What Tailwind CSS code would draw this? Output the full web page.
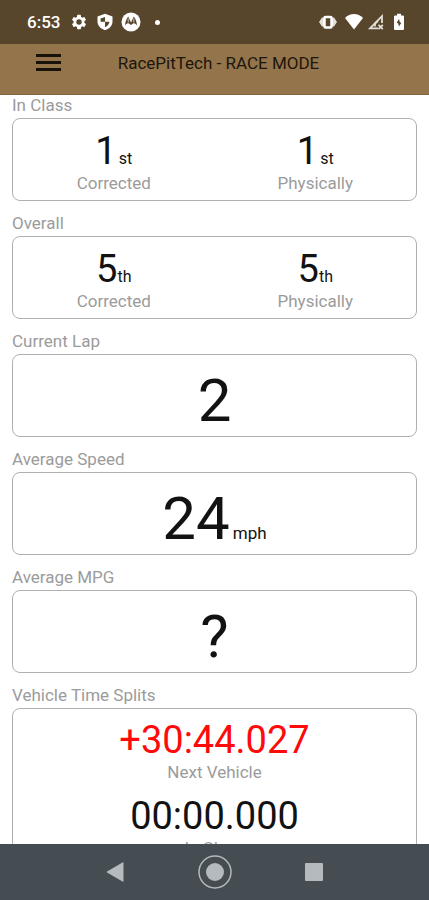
<!DOCTYPE html>
<html lang="en">

<head>
  <meta charset="UTF-8">
  <meta name="viewport" content="width=device-width, initial-scale=1.0">
  <title>RacePitTech - RACE MODE</title>
  <script src="https://cdn.jsdelivr.net/npm/@tailwindcss/browser@4"></script>
</head>

<body class="h-screen flex flex-col bg-white text-[#121212] font-[Roboto,sans-serif]">

  <!-- Status bar -->
  <div class="h-11 shrink-0 bg-[#57452c] text-white flex items-center pl-[27px] pr-6">
    <span class="text-[17px] leading-5 font-medium">6:53</span>
    <svg class="ml-2.5 w-[18px] h-[18px]" viewBox="0 0 24 24" fill="currentColor">
      <path d="M19.14 12.94c.04-.3.06-.61.06-.94s-.02-.64-.07-.94l2.03-1.58a.49.49 0 0 0 .12-.61l-1.92-3.32a.49.49 0 0 0-.59-.22l-2.39.96a7 7 0 0 0-1.62-.94l-.36-2.54a.48.48 0 0 0-.48-.41h-3.84a.47.47 0 0 0-.47.41l-.36 2.54c-.59.24-1.13.57-1.62.94l-2.39-.96a.48.48 0 0 0-.59.22L2.74 8.87a.47.47 0 0 0 .12.61l2.03 1.58c-.05.3-.09.63-.09.94s.02.64.07.94l-2.03 1.58a.49.49 0 0 0-.12.61l1.92 3.32c.12.22.37.29.59.22l2.39-.96c.5.38 1.03.7 1.62.94l.36 2.54c.05.24.24.41.48.41h3.84c.24 0 .44-.17.47-.41l.36-2.54c.59-.24 1.13-.56 1.62-.94l2.39.96c.22.08.47 0 .59-.22l1.92-3.32a.47.47 0 0 0-.12-.61zM12 15.6a3.6 3.6 0 1 1 0-7.2 3.6 3.6 0 0 1 0 7.2z" />
    </svg>
    <svg class="ml-2 w-[18px] h-[18px]" viewBox="0 0 18 18">
      <path fill="currentColor" d="M9 .8l7.500 2.700v5.100c0 4-3 7.400-7.500 8.600-4.500-1.200-7.500-4.600-7.500-8.600V3.500z" />
      <path fill="#57452c" d="M9 4v4.700H4.600V5.600zM9 8.700h4.400c-.2 2.500-1.900 4.500-4.400 5.500z" />
    </svg>
    <svg class="ml-[7px] w-5 h-5" viewBox="0 0 20 20">
      <circle cx="10" cy="10" r="9.500" fill="currentColor" />
      <path fill="#57452c" d="M7.200 4.500L10 10.500l2.800-6c1.800 2.300 3 5.600 3.200 9.300-.7-1.400-1.700-2.300-3.100-2.500-1.200.2-2.100.8-2.900 2-.8-1.200-1.700-1.800-2.900-2-1.400.2-2.400 1.100-3.100 2.500.2-3.700 1.400-7 3.200-9.300z" />
      <path stroke="#fff" stroke-width=".7" fill="none" d="M7.200 6.500v4M12.800 6.500v4" />
    </svg>
    <span class="ml-3.5 w-[5px] h-[5px] rounded-full bg-white"></span>

    <svg class="ml-auto w-5 h-[18px]" viewBox="0 0 20 18">
      <path fill="#e4dfd8" d="M1 9l3-4.500h2v9H4zM19 9l-3-4.500h-2v9h2z" />
      <rect x="6.500" y="4" width="7" height="10.500" rx="1" fill="none" stroke="currentColor" stroke-width="2.500" />
    </svg>
    <svg class="ml-[7px] w-[18px] h-[18px]" viewBox="0 0 18 18" fill="currentColor">
      <path d="M0 5C5-.2 13-.2 18 5L9 16.500z" />
    </svg>
    <svg class="ml-1 w-[18px] h-[18px]" viewBox="0 0 18 18">
      <path fill="none" stroke="#e4dfd8" stroke-width="1.800" d="M15 10V3.200L3 15.300h8" />
      <path fill="none" stroke="#e4dfd8" stroke-width="1.800" d="M11.500 11.800l4.300 4.300M15.800 11.800l-4.300 4.300M8 13.500v-3l3-2.500" />
    </svg>
    <svg class="ml-2 w-3 h-[18px]" viewBox="0 0 12 18">
      <path fill="currentColor" d="M4 .8h4v1.700h2a1 1 0 0 1 1 1V16a1 1 0 0 1-1 1H2a1 1 0 0 1-1-1V3.500a1 1 0 0 1 1-1h2z" />
      <path fill="#57452c" d="M6 6l-2.200 3.500 1.400 1L6 13.500l2.200-3.500-1.400-1z" />
    </svg>
  </div>

  <!-- App bar -->
  <header class="h-[51px] shrink-0 bg-[#94744a] text-[#1c160d] border-b border-[#866538] flex items-center pl-9 pr-[53px] pb-3">
    <button type="button" aria-label="Open menu">
      <svg class="block w-[25px] h-[18px]" viewBox="0 0 25 18" fill="#17120a">
        <path d="M0 0h25v3H0zM0 7h25v3H0zM0 14h25v3H0z" />
      </svg>
    </button>
    <h1 class="flex-1 text-center text-[17px] leading-5">RacePitTech - RACE MODE</h1>
  </header>

  <!-- Race data -->
  <main class="flex-1 min-h-0 overflow-y-auto [scrollbar-width:none] px-3">
    <section class="mb-3">
      <h2 class="text-[17px] leading-5 text-[#9b9b9b] mb-[3px]">In Class</h2>
      <div class="h-[83px] border border-[#b0b0b0] rounded-lg grid grid-cols-2 pt-3 text-center">
        <div>
          <p class="flex justify-center items-baseline gap-0.5"><span class="text-[38px] leading-10">1</span><span class="text-base">st</span></p>
          <p class="mt-0.5 text-[17px] leading-5 text-[#9b9b9b]">Corrected</p>
        </div>
        <div>
          <p class="flex justify-center items-baseline gap-0.5"><span class="text-[38px] leading-10">1</span><span class="text-base">st</span></p>
          <p class="mt-0.5 text-[17px] leading-5 text-[#9b9b9b]">Physically</p>
        </div>
      </div>
    </section>

    <section class="mb-3">
      <h2 class="text-[17px] leading-5 text-[#9b9b9b] mb-[3px]">Overall</h2>
      <div class="h-[83px] border border-[#b0b0b0] rounded-lg grid grid-cols-2 pt-3 text-center">
        <div>
          <p class="flex justify-center items-baseline"><span class="text-[38px] leading-10">5</span><span class="text-base">th</span></p>
          <p class="mt-0.5 text-[17px] leading-5 text-[#9b9b9b]">Corrected</p>
        </div>
        <div>
          <p class="flex justify-center items-baseline"><span class="text-[38px] leading-10">5</span><span class="text-base">th</span></p>
          <p class="mt-0.5 text-[17px] leading-5 text-[#9b9b9b]">Physically</p>
        </div>
      </div>
    </section>

    <section class="mb-3">
      <h2 class="text-[17px] leading-5 text-[#9b9b9b] mb-[3px]">Current Lap</h2>
      <div class="h-[83px] border border-[#b0b0b0] rounded-lg flex justify-center items-baseline pt-3.5">
        <span class="text-[60px] leading-[64px]">2</span>
      </div>
    </section>

    <section class="mb-3">
      <h2 class="text-[17px] leading-5 text-[#9b9b9b] mb-[3px]">Average Speed</h2>
      <div class="h-[83px] border border-[#b0b0b0] rounded-lg flex justify-center items-baseline gap-[3px] pt-3.5">
        <span class="text-[60px] leading-[64px]">24</span><span class="text-[17px]">mph</span>
      </div>
    </section>

    <section class="mb-3">
      <h2 class="text-[17px] leading-5 text-[#9b9b9b] mb-[3px]">Average MPG</h2>
      <div class="h-[83px] border border-[#b0b0b0] rounded-lg flex justify-center items-baseline pt-3.5">
        <span class="text-[60px] leading-[64px]">?</span>
      </div>
    </section>

    <section class="mb-3">
      <h2 class="text-[17px] leading-5 text-[#9b9b9b] mb-[3px]">Vehicle Time Splits</h2>
      <div class="border border-[#b0b0b0] rounded-lg flex flex-col gap-3.5 py-[11px] text-center">
        <div>
          <p class="text-[38px] leading-10 text-[#ff0a0a]">+30:44.027</p>
          <p class="mt-0.5 text-[17px] leading-5 text-[#9b9b9b]">Next Vehicle</p>
        </div>
        <div>
          <p class="text-[38px] leading-10">00:00.000</p>
          <p class="mt-0.5 text-[17px] leading-5 text-[#9b9b9b]">In Class</p>
        </div>
      </div>
    </section>
  </main>

  <!-- System navigation -->
  <nav class="h-14 shrink-0 bg-[#454d52] text-[#b4babd] grid grid-cols-[1fr_auto_1fr] items-center gap-[72px]">
    <button type="button" aria-label="Back" class="justify-self-end">
      <svg class="block w-5 h-5" viewBox="0 0 20 20" fill="currentColor">
        <path d="M17.500 .8v18.400a.6.600 0 0 1-1 .4L1 10.600a.7.700 0 0 1 0-1.200L16.500.4a.6.600 0 0 1 1 .4z" />
      </svg>
    </button>
    <button type="button" aria-label="Home">
      <svg class="block w-[34px] h-[34px]" viewBox="0 0 34 34">
        <circle cx="17" cy="17" r="16" fill="none" stroke="currentColor" stroke-width="1.500" />
        <circle cx="17" cy="17" r="9" fill="currentColor" />
      </svg>
    </button>
    <button type="button" aria-label="Recent apps" class="justify-self-start">
      <svg class="block w-5 h-5" viewBox="0 0 20 20" fill="currentColor">
        <rect x="1" y="1" width="18" height="18" rx="1" />
      </svg>
    </button>
  </nav>

</body>

</html>
